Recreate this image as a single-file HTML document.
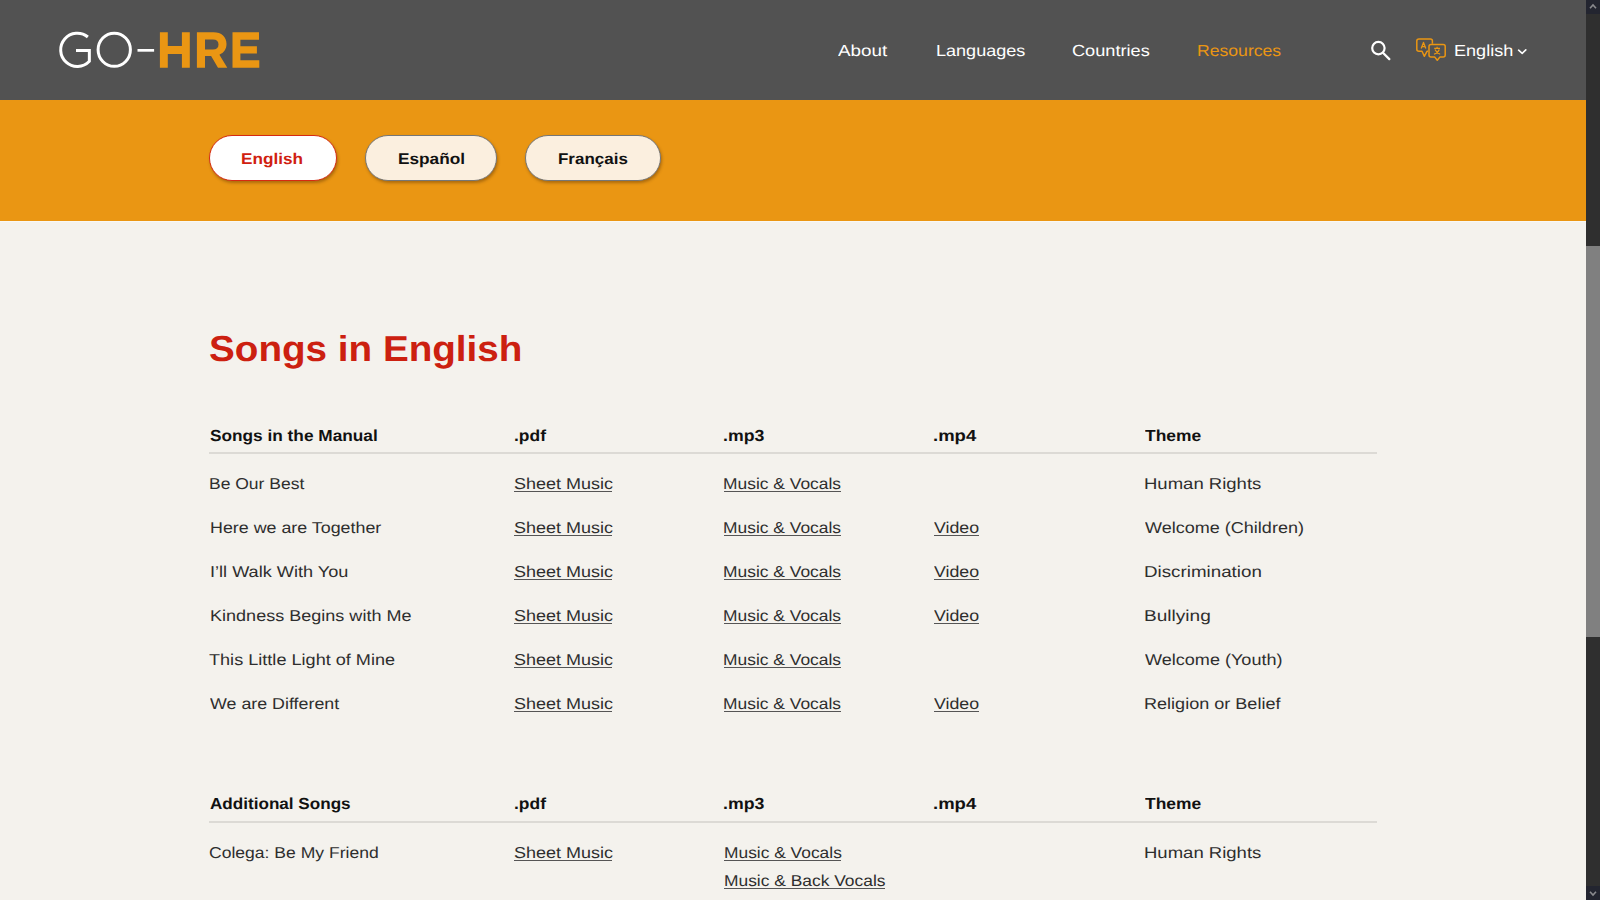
<!DOCTYPE html>
<html><head><meta charset="utf-8"><title>Songs in English - GO-HRE</title>
<style>
html,body{margin:0;padding:0;width:1600px;height:900px;overflow:hidden;background:#f4f2ed;font-family:"Liberation Sans",sans-serif}
.t{position:absolute;white-space:nowrap;text-rendering:geometricPrecision;transform-origin:0 0}
.ul{position:absolute;height:1px;background:#555555}
#hdr{position:absolute;left:0;top:0;width:1586px;height:100px;background:#525252}
#band{position:absolute;left:0;top:100px;width:1586px;height:121px;background:#ea9613}
.btn{position:absolute;box-sizing:border-box;border-radius:23px;box-shadow:1px 2px 3px rgba(60,30,0,.35)}
.rule{position:absolute;left:209px;width:1168px;height:2px;background:#dcdad5}
#sb{position:absolute;left:1586px;top:0;width:14px;height:900px;background:#2f2f2f}
#thumb{position:absolute;left:1586px;top:246px;width:14px;height:391px;background:#808080}
</style></head><body>
<div id="hdr"></div>
<div id="band"></div>
<div style="position:absolute;left:0;top:221px;width:1586px;height:1px;background:#f8f8f6"></div>
<div class="btn" style="left:209px;top:135px;width:128px;height:46px;background:#fff;border:1px solid #d62a12"></div>
<div class="btn" style="left:365px;top:135px;width:132px;height:46px;background:#fbefdf;border:1px solid #767676"></div>
<div class="btn" style="left:525px;top:135px;width:136px;height:46px;background:#fbefdf;border:1px solid #767676"></div>
<div class="rule" style="top:452px"></div>
<div class="rule" style="top:821px"></div>
<div class="t" id="nav1" style="left:838.00px;top:44px;font-size:16px;line-height:16px;font-weight:400;color:#ffffff;transform:scaleX(1.1764)">About</div>
<div class="t" id="nav2" style="left:935.87px;top:44px;font-size:16px;line-height:16px;font-weight:400;color:#ffffff;transform:scaleX(1.1282)">Languages</div>
<div class="t" id="nav3" style="left:1072.43px;top:44px;font-size:16px;line-height:16px;font-weight:400;color:#ffffff;transform:scaleX(1.1354)">Countries</div>
<div class="t" id="nav4" style="left:1197.45px;top:44px;font-size:16px;line-height:16px;font-weight:400;color:#ea9613;transform:scaleX(1.1001)">Resources</div>
<div class="t" id="nav5" style="left:1454.05px;top:44px;font-size:16px;line-height:16px;font-weight:400;color:#ffffff;transform:scaleX(1.1297)">English</div>
<div class="t" id="btn1" style="left:241.35px;top:152px;font-size:15.5px;line-height:15.5px;font-weight:700;color:#d0200f;transform:scaleX(1.1094)">English</div>
<div class="t" id="btn2" style="left:397.89px;top:152px;font-size:15.5px;line-height:15.5px;font-weight:700;color:#111111;transform:scaleX(1.1122)">Español</div>
<div class="t" id="btn3" style="left:557.90px;top:152px;font-size:15.5px;line-height:15.5px;font-weight:700;color:#111111;transform:scaleX(1.0952)">Français</div>
<div class="t" id="title" style="left:208.65px;top:331px;font-size:36px;line-height:36px;font-weight:700;color:#cc2010;transform:scaleX(1.0734)">Songs in English</div>
<div class="t" id="t1h1" style="left:209.55px;top:429px;font-size:16px;line-height:16px;font-weight:700;color:#111111;transform:scaleX(1.0780)">Songs in the Manual</div>
<div class="t" id="t1h2" style="left:513.55px;top:429px;font-size:16px;line-height:16px;font-weight:700;color:#111111;transform:scaleX(1.0902)">.pdf</div>
<div class="t" id="t1h3" style="left:722.97px;top:429px;font-size:16px;line-height:16px;font-weight:700;color:#111111;transform:scaleX(1.1059)">.mp3</div>
<div class="t" id="t1h4" style="left:932.92px;top:429px;font-size:16px;line-height:16px;font-weight:700;color:#111111;transform:scaleX(1.1561)">.mp4</div>
<div class="t" id="t1h5" style="left:1144.73px;top:429px;font-size:16px;line-height:16px;font-weight:700;color:#111111;transform:scaleX(1.0889)">Theme</div>
<div class="t" id="r0c1" style="left:209.35px;top:477px;font-size:15.8px;line-height:15.8px;font-weight:400;color:#2e2e2e;transform:scaleX(1.1071)">Be Our Best</div>
<div class="t" id="r0c2" style="left:513.51px;top:477px;font-size:15.8px;line-height:15.8px;font-weight:400;color:#2e2e2e;transform:scaleX(1.1397)">Sheet Music</div>
<div class="ul" style="left:514.4px;top:491px;width:97.5px"></div>
<div class="t" id="r0c3" style="left:722.99px;top:477px;font-size:15.8px;line-height:15.8px;font-weight:400;color:#2e2e2e;transform:scaleX(1.1020)">Music &amp; Vocals</div>
<div class="ul" style="left:723.9px;top:491px;width:117.1px"></div>
<div class="t" id="r0c5" style="left:1143.58px;top:477px;font-size:15.8px;line-height:15.8px;font-weight:400;color:#2e2e2e;transform:scaleX(1.1718)">Human Rights</div>
<div class="t" id="r1c1" style="left:209.61px;top:521px;font-size:15.8px;line-height:15.8px;font-weight:400;color:#2e2e2e;transform:scaleX(1.1298)">Here we are Together</div>
<div class="t" id="r1c2" style="left:513.51px;top:521px;font-size:15.8px;line-height:15.8px;font-weight:400;color:#2e2e2e;transform:scaleX(1.1397)">Sheet Music</div>
<div class="ul" style="left:514.4px;top:535px;width:97.5px"></div>
<div class="t" id="r1c3" style="left:722.99px;top:521px;font-size:15.8px;line-height:15.8px;font-weight:400;color:#2e2e2e;transform:scaleX(1.1020)">Music &amp; Vocals</div>
<div class="ul" style="left:723.9px;top:535px;width:117.1px"></div>
<div class="t" id="r1c4" style="left:933.72px;top:521px;font-size:15.8px;line-height:15.8px;font-weight:400;color:#2e2e2e;transform:scaleX(1.1250)">Video</div>
<div class="ul" style="left:933.8px;top:535px;width:45.0px"></div>
<div class="t" id="r1c5" style="left:1144.74px;top:521px;font-size:15.8px;line-height:15.8px;font-weight:400;color:#2e2e2e;transform:scaleX(1.1411)">Welcome (Children)</div>
<div class="t" id="r2c1" style="left:209.59px;top:565px;font-size:15.8px;line-height:15.8px;font-weight:400;color:#2e2e2e;transform:scaleX(1.1479)">I’ll Walk With You</div>
<div class="t" id="r2c2" style="left:513.51px;top:565px;font-size:15.8px;line-height:15.8px;font-weight:400;color:#2e2e2e;transform:scaleX(1.1397)">Sheet Music</div>
<div class="ul" style="left:514.4px;top:579px;width:97.5px"></div>
<div class="t" id="r2c3" style="left:722.99px;top:565px;font-size:15.8px;line-height:15.8px;font-weight:400;color:#2e2e2e;transform:scaleX(1.1020)">Music &amp; Vocals</div>
<div class="ul" style="left:723.9px;top:579px;width:117.1px"></div>
<div class="t" id="r2c4" style="left:933.72px;top:565px;font-size:15.8px;line-height:15.8px;font-weight:400;color:#2e2e2e;transform:scaleX(1.1250)">Video</div>
<div class="ul" style="left:933.8px;top:579px;width:45.0px"></div>
<div class="t" id="r2c5" style="left:1143.56px;top:565px;font-size:15.8px;line-height:15.8px;font-weight:400;color:#2e2e2e;transform:scaleX(1.1878)">Discrimination</div>
<div class="t" id="r3c1" style="left:209.60px;top:609px;font-size:15.8px;line-height:15.8px;font-weight:400;color:#2e2e2e;transform:scaleX(1.1417)">Kindness Begins with Me</div>
<div class="t" id="r3c2" style="left:513.51px;top:609px;font-size:15.8px;line-height:15.8px;font-weight:400;color:#2e2e2e;transform:scaleX(1.1397)">Sheet Music</div>
<div class="ul" style="left:514.4px;top:623px;width:97.5px"></div>
<div class="t" id="r3c3" style="left:722.99px;top:609px;font-size:15.8px;line-height:15.8px;font-weight:400;color:#2e2e2e;transform:scaleX(1.1020)">Music &amp; Vocals</div>
<div class="ul" style="left:723.9px;top:623px;width:117.1px"></div>
<div class="t" id="r3c4" style="left:933.72px;top:609px;font-size:15.8px;line-height:15.8px;font-weight:400;color:#2e2e2e;transform:scaleX(1.1250)">Video</div>
<div class="ul" style="left:933.8px;top:623px;width:45.0px"></div>
<div class="t" id="r3c5" style="left:1143.56px;top:609px;font-size:15.8px;line-height:15.8px;font-weight:400;color:#2e2e2e;transform:scaleX(1.2077)">Bullying</div>
<div class="t" id="r4c1" style="left:209.34px;top:653px;font-size:15.8px;line-height:15.8px;font-weight:400;color:#2e2e2e;transform:scaleX(1.1457)">This Little Light of Mine</div>
<div class="t" id="r4c2" style="left:513.51px;top:653px;font-size:15.8px;line-height:15.8px;font-weight:400;color:#2e2e2e;transform:scaleX(1.1397)">Sheet Music</div>
<div class="ul" style="left:514.4px;top:667px;width:97.5px"></div>
<div class="t" id="r4c3" style="left:722.99px;top:653px;font-size:15.8px;line-height:15.8px;font-weight:400;color:#2e2e2e;transform:scaleX(1.1020)">Music &amp; Vocals</div>
<div class="ul" style="left:723.9px;top:667px;width:117.1px"></div>
<div class="t" id="r4c5" style="left:1144.74px;top:653px;font-size:15.8px;line-height:15.8px;font-weight:400;color:#2e2e2e;transform:scaleX(1.1434)">Welcome (Youth)</div>
<div class="t" id="r5c1" style="left:210.00px;top:697px;font-size:15.8px;line-height:15.8px;font-weight:400;color:#2e2e2e;transform:scaleX(1.1288)">We are Different</div>
<div class="t" id="r5c2" style="left:513.51px;top:697px;font-size:15.8px;line-height:15.8px;font-weight:400;color:#2e2e2e;transform:scaleX(1.1397)">Sheet Music</div>
<div class="ul" style="left:514.4px;top:711px;width:97.5px"></div>
<div class="t" id="r5c3" style="left:722.99px;top:697px;font-size:15.8px;line-height:15.8px;font-weight:400;color:#2e2e2e;transform:scaleX(1.1020)">Music &amp; Vocals</div>
<div class="ul" style="left:723.9px;top:711px;width:117.1px"></div>
<div class="t" id="r5c4" style="left:933.72px;top:697px;font-size:15.8px;line-height:15.8px;font-weight:400;color:#2e2e2e;transform:scaleX(1.1250)">Video</div>
<div class="ul" style="left:933.8px;top:711px;width:45.0px"></div>
<div class="t" id="r5c5" style="left:1143.60px;top:697px;font-size:15.8px;line-height:15.8px;font-weight:400;color:#2e2e2e;transform:scaleX(1.1429)">Religion or Belief</div>
<div class="t" id="t2h1" style="left:209.56px;top:797px;font-size:16px;line-height:16px;font-weight:700;color:#111111;transform:scaleX(1.0687)">Additional Songs</div>
<div class="t" id="t2h2" style="left:513.55px;top:797px;font-size:16px;line-height:16px;font-weight:700;color:#111111;transform:scaleX(1.0902)">.pdf</div>
<div class="t" id="t2h3" style="left:722.97px;top:797px;font-size:16px;line-height:16px;font-weight:700;color:#111111;transform:scaleX(1.1059)">.mp3</div>
<div class="t" id="t2h4" style="left:932.92px;top:797px;font-size:16px;line-height:16px;font-weight:700;color:#111111;transform:scaleX(1.1561)">.mp4</div>
<div class="t" id="t2h5" style="left:1144.73px;top:797px;font-size:16px;line-height:16px;font-weight:700;color:#111111;transform:scaleX(1.0889)">Theme</div>
<div class="t" id="s0c1" style="left:208.53px;top:846px;font-size:15.8px;line-height:15.8px;font-weight:400;color:#2e2e2e;transform:scaleX(1.1106)">Colega: Be My Friend</div>
<div class="t" id="s0c2" style="left:513.51px;top:846px;font-size:15.8px;line-height:15.8px;font-weight:400;color:#2e2e2e;transform:scaleX(1.1397)">Sheet Music</div>
<div class="ul" style="left:514.4px;top:860px;width:97.5px"></div>
<div class="t" id="s0c3" style="left:723.54px;top:846px;font-size:15.8px;line-height:15.8px;font-weight:400;color:#2e2e2e;transform:scaleX(1.1000)">Music &amp; Vocals</div>
<div class="ul" style="left:724.4px;top:860px;width:116.2px"></div>
<div class="t" id="s1c3" style="left:723.54px;top:874px;font-size:15.8px;line-height:15.8px;font-weight:400;color:#2e2e2e;transform:scaleX(1.1014)">Music &amp; Back Vocals</div>
<div class="ul" style="left:724.4px;top:888px;width:160.6px"></div>
<div class="t" id="s0c5" style="left:1143.58px;top:846px;font-size:15.8px;line-height:15.8px;font-weight:400;color:#2e2e2e;transform:scaleX(1.1718)">Human Rights</div>
<svg id="icons" width="1600" height="100" style="position:absolute;left:0;top:0">
<g fill="none" stroke="#ffffff" stroke-width="3">
<path d="M87.86 36.99 A16.6 16.6 0 1 0 89.35 61.2 L89.35 50.5 L76 50.5" stroke-linejoin="miter"/>
<ellipse cx="114.25" cy="49.76" rx="16.15" ry="16.6"/>
</g>
<rect x="137.5" y="49" width="16.6" height="2.7" fill="#ffffff"/>
<g fill="#ea9613" fill-rule="evenodd">
<path d="M159.9 32.2H167.8V45.9H181.9V32.2H189.8V67.7H181.9V54H167.8V67.7H159.9Z"/>
<path d="M196.9 32.2H213.5C221.6 32.2 226.5 36.8 226.5 44.1C226.5 49.1 224 52.9 219.4 54.7L227.3 67.7H218L211.1 56.1H205V67.7H196.9ZM205 39.5H212.8C216.6 39.5 218.5 41.3 218.5 44.5C218.5 47.7 216.6 49.5 212.8 49.5H205Z"/>
<path d="M232.5 32.2H259V39.8H240.4V46.2H256.9V53.6H240.4V60.3H259.3V67.7H232.5Z"/>
</g>
<g fill="none" stroke="#ffffff" stroke-linecap="round">
<circle cx="1378.4" cy="48.1" r="6.2" stroke-width="2.2"/>
<path d="M1383.2 53 L1389.3 59.1" stroke-width="2.3"/>
<path d="M1518.6 50.2 L1522.2 53.3 L1525.8 49.9" stroke-width="1.6" stroke-linejoin="round"/>
</g>
<g fill="none" stroke="#ea9613" stroke-width="1.5" stroke-linejoin="round">
<path d="M1419 39.1 H1430.4 Q1432.4 39.1 1432.4 41.1 V43.8 M1428 51.3 H1427 L1424.3 56.3 L1422 51.3 H1419 Q1416.8 51.3 1416.8 49.3 V41.1 Q1416.8 39.1 1419 39.1"/>
<path d="M1431 44.6 H1443.2 Q1445.2 44.6 1445.2 46.6 V54.9 Q1445.2 56.9 1443.2 56.9 H1440 L1437.3 60.3 L1434.6 56.9 H1431 Q1429 56.9 1429 54.9 V46.6 Q1429 44.6 1431 44.6Z"/>
<path d="M1421.2 48.6 L1423.5 42.4 L1425.8 48.6 M1422 46.6 H1425" stroke-width="1.3"/>
<path d="M1434.2 48.4 H1440 M1437.1 46.8 V48.4 M1435 49.4 Q1436.5 53 1440.2 54.2 M1439.3 49.4 Q1437.8 53 1434 54.2" stroke-width="1.2"/>
</g>
</svg>
<div id="sb"></div><div id="thumb"></div>
<div style="position:absolute;left:1586px;top:0;width:14px;height:14px;background:#232530"></div>
<div style="position:absolute;left:1586px;top:886px;width:14px;height:14px;background:#232530"></div>
<svg width="14" height="900" style="position:absolute;left:1586px;top:0">
<path d="M4 8.3 L7 5 L10 8.3" fill="none" stroke="#8a8a8e" stroke-width="1.6"/>
<path d="M4 891.7 L7 895 L10 891.7" fill="none" stroke="#8a8a8e" stroke-width="1.6"/>
</svg>
</body></html>
